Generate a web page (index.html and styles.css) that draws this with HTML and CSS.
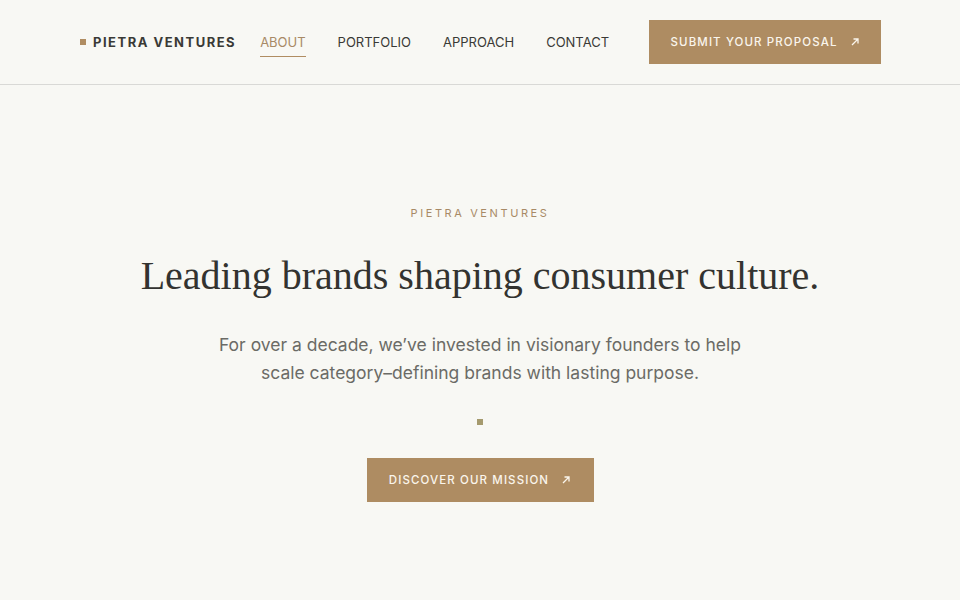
FILE: index.html
```html
<!DOCTYPE html>
<html lang="en">
<head>
<meta charset="utf-8">
<title>Pietra Ventures</title>
<link rel="stylesheet" href="styles.css">
</head>
<body>
<header class="site-header">
  <div class="header-inner">
    <a class="logo" href="#"><span class="logo-mark"></span>PIETRA VENTURES</a>
    <nav class="nav">
      <a class="nav-link active" href="#">ABOUT</a>
      <a class="nav-link" href="#">PORTFOLIO</a>
      <a class="nav-link" href="#">APPROACH</a>
      <a class="nav-link" href="#">CONTACT</a>
    </nav>
    <a class="btn btn-header" href="#">SUBMIT YOUR PROPOSAL
      <svg class="arrow" viewBox="0 0 10 10" width="10" height="10"><path d="M2 8 L8 2 M3.5 2 H8 V6.5" fill="none" stroke="currentColor" stroke-width="1.3"/></svg>
    </a>
  </div>
</header>
<main class="hero">
  <p class="eyebrow">PIETRA VENTURES</p>
  <h1 class="title">Leading brands shaping consumer culture.</h1>
  <p class="lead">For over a decade, we’ve invested in visionary founders to help scale category–defining brands with lasting purpose.</p>
  <span class="dot"></span>
  <a class="btn btn-hero" href="#">DISCOVER OUR MISSION
    <svg class="arrow" viewBox="0 0 10 10" width="10" height="10"><path d="M2 8 L8 2 M3.5 2 H8 V6.5" fill="none" stroke="currentColor" stroke-width="1.3"/></svg>
  </a>
</main>
</body>
</html>
```

FILE: styles.css
```css
* { box-sizing: border-box; }
html, body { margin: 0; padding: 0; }
body {
  background: #f8f8f4;
  font-family: Inter, "Noto Sans", sans-serif;
  color: #333;
  height: 600px;
  overflow: hidden;
}
a { text-decoration: none; color: inherit; }

.site-header {
  height: 85px;
  border-bottom: 1px solid #d9d9d6;
}
.header-inner {
  width: 802px;
  margin: 0 auto;
  height: 84px;
  display: flex;
  align-items: center;
}
.logo {
  display: flex;
  align-items: center;
  font-weight: 700;
  font-size: 13px;
  letter-spacing: 1.5px;
  color: #3a3a36;
  margin-left: 1px;
}
.logo-mark {
  width: 6px;
  height: 6px;
  background: #b08d62;
  margin-right: 7px;
}
.nav {
  display: flex;
  gap: 32px;
  margin-left: 24px;
}
.nav-link {
  font-size: 13px;
  color: #3a3a36;
  padding: 6px 0;
  border-bottom: 1px solid transparent;
}
.nav-link.active {
  color: #a88a66;
  border-bottom-color: #b08d62;
}
.btn {
  display: inline-flex;
  align-items: center;
  justify-content: center;
  gap: 12px;
  height: 44px;
  background: #ae8c62;
  color: #faf5ec;
  font-size: 11.5px;
  font-weight: 500;
  letter-spacing: 1.1px;
}
.btn-header {
  margin-left: auto;
  width: 232px;
}
.arrow { display: block; }

.hero {
  display: flex;
  flex-direction: column;
  align-items: center;
  text-align: center;
  padding-top: 121px;
}
.eyebrow {
  margin: 0;
  font-size: 11px;
  letter-spacing: 2.6px;
  color: #a88a66;
}
.title {
  margin: 30px 0 0;
  font-family: "Liberation Serif", serif;
  font-weight: 400;
  font-size: 40px;
  line-height: 52px;
  color: #333330;
}
.lead {
  margin: 29px 0 0;
  width: 540px;
  font-size: 17.5px;
  line-height: 28px;
  color: #6b6b66;
}
.dot {
  width: 6px;
  height: 6px;
  background: #a59a6e;
  margin-top: 32px;
}
.btn-hero {
  margin-top: 33px;
  width: 227px;
}
```
